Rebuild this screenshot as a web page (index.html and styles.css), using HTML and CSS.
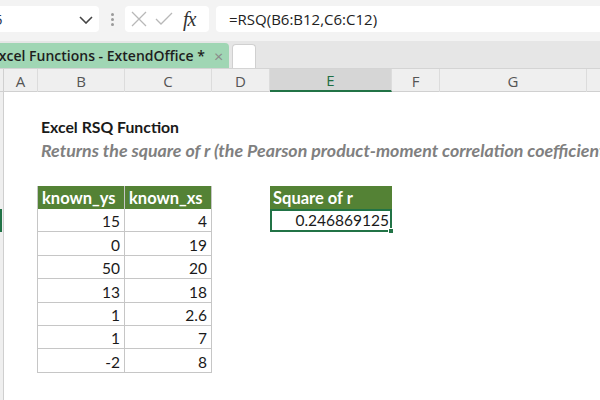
FILE: index.html
```html
<!DOCTYPE html>
<html>
<head>
<meta charset="utf-8">
<link rel="stylesheet" href="styles.css">
</head>
<body>
<div class="app">
  <div class="toolbar">
    <div class="namebox"><span class="nb-text">G5</span>
      <svg class="chev" width="14" height="8" viewBox="0 0 14 8"><path d="M1 1 L7 7 L13 1" fill="none" stroke="#444" stroke-width="1.6"/></svg>
    </div>
    <div class="dots"><i></i><i></i><i></i></div>
    <div class="fxbox">
      <svg width="16" height="16" viewBox="0 0 16 16"><path d="M1 1 L15 15 M15 1 L1 15" stroke="#b8b8b8" stroke-width="1.3" fill="none"/></svg>
      <svg width="18" height="14" viewBox="0 0 18 14"><path d="M1 7 L6 12 L17 1" stroke="#b8b8b8" stroke-width="1.3" fill="none"/></svg>
      <span class="fx">fx</span>
    </div>
    <div class="formula">=RSQ(B6:B12,C6:C12)</div>
  </div>
  <div class="tabbar">
    <div class="tab active"><span class="tab-text">Excel Functions - ExtendOffice *</span><span class="tab-x">×</span></div>
    <div class="tab blank"></div>
  </div>
  <div class="colheads">
    <div class="ch corner"></div>
    <div class="ch">A</div>
    <div class="ch">B</div>
    <div class="ch">C</div>
    <div class="ch">D</div>
    <div class="ch sel">E</div>
    <div class="ch">F</div>
    <div class="ch">G</div>
    <div class="ch last"></div>
  </div>
  <div class="sheet">
    <div class="rowhdr"><div class="rowmark"></div></div>
    <div class="title">Excel RSQ Function</div>
    <div class="subtitle">Returns the square of r (the Pearson product-moment correlation coefficient</div>
    <div class="data">
      <div class="hd">known_ys</div><div class="hd">known_xs</div>
      <div class="c">15</div><div class="c">4</div>
      <div class="c">0</div><div class="c">19</div>
      <div class="c">50</div><div class="c">20</div>
      <div class="c">13</div><div class="c">18</div>
      <div class="c">1</div><div class="c">2.6</div>
      <div class="c">1</div><div class="c">7</div>
      <div class="c">-2</div><div class="c">8</div>
    </div>
    <div class="result">
      <div class="hd">Square of r</div>
      <div class="c active">0.246869125<span class="handle"></span></div>
    </div>
  </div>
</div>
</body>
</html>
```
FILE: styles.css
```css
* { box-sizing: border-box; }
html, body { margin: 0; padding: 0; }
body { width: 600px; height: 400px; overflow: hidden; background: #fff; font-family: "Lato", "Open Sans", sans-serif; }
.app { width: 600px; height: 400px; overflow: hidden; display: flex; flex-direction: column; }

.toolbar { height: 41px; background: #f3f3f3; display: flex; align-items: flex-start; padding-top: 6px; flex: none; }
.namebox { width: 99px; height: 26px; background: #fff; border-radius: 0 4px 4px 0; display: flex; align-items: center; justify-content: space-between; padding-right: 6px; overflow: hidden; }
.nb-text { font-family: "Open Sans", sans-serif; font-size: 15px; color: #2b3a55; margin-left: -17px; }
.chev { margin-top: 1px; }
.dots { width: 26px; height: 26px; display: flex; flex-direction: column; align-items: center; justify-content: center; gap: 2px; }
.dots i { display: block; width: 3px; height: 3px; background: #9a9a9a; border-radius: 50%; }
.fxbox { width: 84px; height: 26px; background: #fff; border-radius: 4px; display: flex; align-items: center; padding-left: 6px; gap: 8px; }
.fx { font-family: "Liberation Serif", serif; font-style: italic; font-size: 20px; color: #333; margin-left: 2px; letter-spacing: -1px; }
.formula { flex: 1; height: 26px; margin-left: 7px; background: #fff; border-radius: 4px 0 0 4px; font-family: "Open Sans", sans-serif; font-size: 15px; color: #222; padding-left: 13px; line-height: 26px; }

.tabbar { height: 27px; background: #e6e6e6; display: flex; align-items: flex-end; gap: 3px; flex: none; }
.tab { height: 25px; border-radius: 4px 4px 0 0; }
.tab.active { width: 229px; background: #a0d6b4; display: flex; align-items: center; overflow: hidden; border-radius: 0 4px 0 0; }
.tab-text { font-family: "Open Sans", sans-serif; font-weight: 600; font-size: 14px; color: #1e1e1e; margin-left: -9px; white-space: nowrap; }
.tab-x { color: #8a8a8a; font-size: 16px; margin-left: 9px; }
.tab.blank { width: 24px; height: 24px; background: #fff; border: 1px solid #d0d0d0; border-bottom: none; }

.colheads { height: 24px; display: grid; grid-template-columns: 4px 34px 87px 87px 58px 122px 48px 147px 1fr; background: #efefef; border-top: 1px solid #d4d4d4; border-bottom: 1px solid #d0d0d0; flex: none; }
.ch { border-right: 1px solid #dcdcdc; display: flex; align-items: center; justify-content: center; font-family: "Open Sans", sans-serif; font-size: 15px; color: #555; }
.ch.corner { border-right: 1px solid #d0d0d0; }
.ch.sel { background: #d6d6d6; color: #1f6e43; border-bottom: 2px solid #217346; padding-top: 1px; }
.ch.last { border-right: none; }

.sheet { flex: 1; display: grid; grid-template-columns: 4px 34px 87px 87px 58px 122px 48px 147px 1fr; grid-template-rows: repeat(14, 23.4px); }
.rowhdr { grid-column: 1; grid-row: 1 / 15; background: #efefef; border-right: 1px solid #cfcfcf; display: grid; grid-template-rows: repeat(14, 23.4px); }
.rowmark { grid-row: 6; background: #217346; width: 2px; }
.title { grid-column: 3 / 8; grid-row: 2; align-self: end; padding-left: 3px; padding-bottom: 3px; font-weight: 700; font-size: 15.8px; color: #1a1a1a; white-space: nowrap; }
.subtitle { grid-column: 3 / 10; grid-row: 3; align-self: end; padding-left: 3px; padding-bottom: 1px; font-weight: 700; font-style: italic; font-size: 17.8px; color: #808080; white-space: nowrap; overflow: hidden; }

.data { grid-column: 3 / 5; grid-row: 5 / 13; display: grid; grid-template-columns: 87px 87px; grid-template-rows: repeat(8, 1fr); border-left: 1px solid #c6c6c6; margin-left: -1px; }
.hd { background: #548235; color: #fff; font-weight: 700; font-size: 16.5px; display: flex; align-items: flex-end; padding: 0 0 1px 4px; border-right: 1px solid #c6c6c6; white-space: nowrap; }
.c { font-size: 15.5px; color: #1a1a1a; display: flex; align-items: flex-end; justify-content: flex-end; padding: 0 4px 1px 0; border-right: 1px solid #c6c6c6; border-bottom: 1px solid #c6c6c6; }

.result { grid-column: 6; grid-row: 5 / 7; display: grid; grid-template-rows: 1fr 1fr; }
.result .hd { border-right: none; padding-left: 3px; }
.result .c.active { border: 2px solid #217346; position: relative; padding-right: 1px; }
.handle { position: absolute; right: -4px; bottom: -4px; width: 6px; height: 6px; background: #217346; border: 1px solid #fff; }
```
